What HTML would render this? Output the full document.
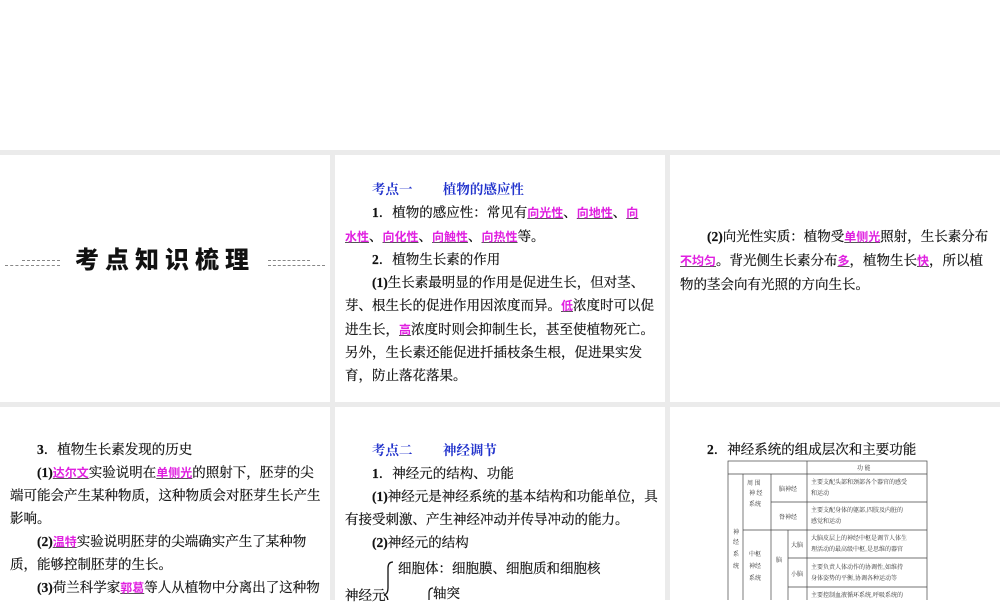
<!DOCTYPE html>
<html><head><meta charset="utf-8"><style>
*{margin:0;padding:0}
body{width:1000px;height:600px;background:#fff;position:relative;overflow:hidden;font-family:"Liberation Serif","Noto Serif CJK SC",serif;}
.bg{position:absolute;left:0;top:150px;width:1000px;height:450px;background:#ebebeb}
.p{position:absolute;background:#fff;overflow:hidden}
.l{position:absolute;white-space:nowrap;font-size:13.5px;color:#111;line-height:16px;-webkit-text-stroke:0.2px #111}
.b{font-weight:bold}
.k{color:#e020e0;font-weight:bold;text-decoration:underline;text-decoration-color:#555;font-size:12px;-webkit-text-stroke:0;font-family:"Liberation Sans","Noto Sans CJK SC",sans-serif}
.h{color:#2233cc;font-weight:bold;-webkit-text-stroke:0}
.title{position:absolute;left:0;top:246px;width:330px;text-align:center;font-family:"Liberation Sans","Noto Sans CJK SC",sans-serif;font-weight:900;font-size:24px;letter-spacing:6px;color:#111;line-height:30px}
.dl{position:absolute;height:0;border-top:1px dashed #888}
</style></head><body>
<div class="bg"></div>
<div class="p" style="left:0;top:155px;width:330px;height:247px"></div>
<div class="p" style="left:335px;top:155px;width:330px;height:247px"></div>
<div class="p" style="left:670px;top:155px;width:330px;height:247px"></div>
<div class="p" style="left:0;top:407px;width:330px;height:193px"></div>
<div class="p" style="left:335px;top:407px;width:330px;height:193px"></div>
<div class="p" style="left:670px;top:407px;width:330px;height:193px"></div>

<div class="title">考点知识梳理</div>
<div class="dl" style="left:5px;top:265px;width:55px"></div>
<div class="dl" style="left:22px;top:260px;width:38px"></div>
<div class="dl" style="left:268px;top:265px;width:57px"></div>
<div class="dl" style="left:268px;top:260px;width:42px"></div>

<div class="l h" style="left:372px;top:182px">考点一&nbsp;&nbsp;&nbsp;&nbsp;&nbsp;&nbsp;&nbsp;&nbsp;&nbsp;植物的感应性</div>
<div class="l" style="left:372px;top:205px"><span class="b">1</span>．植物的感应性：常见有<span class="k">向光性</span>、<span class="k">向地性</span>、<span class="k">向</span></div>
<div class="l" style="left:345px;top:229px"><span class="k">水性</span>、<span class="k">向化性</span>、<span class="k">向触性</span>、<span class="k">向热性</span>等。</div>
<div class="l" style="left:372px;top:252px"><span class="b">2</span>．植物生长素的作用</div>
<div class="l" style="left:372px;top:275px"><span class="b">(1)</span>生长素最明显的作用是促进生长，但对茎、</div>
<div class="l" style="left:345px;top:298px">芽、根生长的促进作用因浓度而异。<span class="k">低</span>浓度时可以促</div>
<div class="l" style="left:345px;top:322px">进生长，<span class="k">高</span>浓度时则会抑制生长，甚至使植物死亡。</div>
<div class="l" style="left:345px;top:345px">另外，生长素还能促进扦插枝条生根，促进果实发</div>
<div class="l" style="left:345px;top:368px">育，防止落花落果。</div>

<div class="l" style="left:707px;top:229px"><span class="b">(2)</span>向光性实质：植物受<span class="k">单侧光</span>照射，生长素分布</div>
<div class="l" style="left:680px;top:253px"><span class="k">不均匀</span>。背光侧生长素分布<span class="k">多</span>，植物生长<span class="k">快</span>，所以植</div>
<div class="l" style="left:680px;top:277px">物的茎会向有光照的方向生长。</div>

<div class="l" style="left:37px;top:442px"><span class="b">3</span>．植物生长素发现的历史</div>
<div class="l" style="left:37px;top:465px"><span class="b">(1)</span><span class="k">达尔文</span>实验说明在<span class="k">单侧光</span>的照射下，胚芽的尖</div>
<div class="l" style="left:10px;top:488px">端可能会产生某种物质，这种物质会对胚芽生长产生</div>
<div class="l" style="left:10px;top:511px">影响。</div>
<div class="l" style="left:37px;top:534px"><span class="b">(2)</span><span class="k">温特</span>实验说明胚芽的尖端确实产生了某种物</div>
<div class="l" style="left:10px;top:557px">质，能够控制胚芽的生长。</div>
<div class="l" style="left:37px;top:580px"><span class="b">(3)</span>荷兰科学家<span class="k">郭葛</span>等人从植物中分离出了这种物</div>

<div class="l h" style="left:372px;top:443px">考点二&nbsp;&nbsp;&nbsp;&nbsp;&nbsp;&nbsp;&nbsp;&nbsp;&nbsp;神经调节</div>
<div class="l" style="left:372px;top:466px"><span class="b">1</span>．神经元的结构、功能</div>
<div class="l" style="left:372px;top:489px"><span class="b">(1)</span>神经元是神经系统的基本结构和功能单位，具</div>
<div class="l" style="left:345px;top:512px">有接受刺激、产生神经冲动并传导冲动的能力。</div>
<div class="l" style="left:372px;top:535px"><span class="b">(2)</span>神经元的结构</div>
<div class="l" style="left:398px;top:561px">细胞体：细胞膜、细胞质和细胞核</div>
<div class="l" style="left:345px;top:588px">神经元</div>
<div class="l" style="left:433px;top:586px">轴突</div>
<svg style="position:absolute;left:380px;top:560px" width="60" height="40"><path d="M13 2 Q8 2 8 8 L8 28 Q8 34 4 35 Q8 36 8 42" fill="none" stroke="#111" stroke-width="1.3"/><path d="M53 28 Q49 28 49 33 L49 40" fill="none" stroke="#111" stroke-width="1.2"/></svg>

<div class="l" style="left:707px;top:442px"><span class="b">2</span>．神经系统的组成层次和主要功能</div>
<svg style="position:absolute;left:727px;top:460px" width="202" height="140" font-family="Noto Serif CJK SC,serif" font-size="6" fill="#333">
<g stroke="#444" stroke-width="0.7" fill="none">
<rect x="1" y="1" width="199" height="150"/>
<line x1="1" y1="14" x2="200" y2="14"/>
<line x1="16" y1="14" x2="16" y2="150"/>
<line x1="80" y1="1" x2="80" y2="150"/>
<line x1="44" y1="14" x2="44" y2="70"/>
<line x1="44" y1="42" x2="200" y2="42"/>
<line x1="16" y1="70" x2="200" y2="70"/>
<line x1="44" y1="70" x2="44" y2="150"/>
<line x1="61" y1="70" x2="61" y2="150"/>
<line x1="61" y1="98" x2="200" y2="98"/>
<line x1="61" y1="127" x2="200" y2="127"/>
</g>
<text x="130" y="10">功 能</text>
<text x="20" y="25">周 围</text><text x="22" y="35">神 经</text><text x="22" y="46">系统</text>
<text x="52" y="31">脑神经</text><text x="52" y="59">脊神经</text>
<text x="84" y="24">主要支配头部和颈部各个器官的感受</text><text x="84" y="35">和运动</text>
<text x="84" y="52">主要支配身体的躯部,四肢及内脏的</text><text x="84" y="63">感觉和运动</text>
<text x="6" y="74">神</text><text x="6" y="84">经</text><text x="6" y="96">系</text><text x="6" y="108">统</text>
<text x="22" y="96">中枢</text><text x="22" y="108">神经</text><text x="22" y="120">系统</text>
<text x="49" y="102">脑</text>
<text x="64" y="87">大脑</text><text x="64" y="116">小脑</text>
<text x="84" y="80">大脑皮层上的神经中枢是调节人体生</text><text x="84" y="91">理活动的最高级中枢,是思维的器官</text>
<text x="84" y="109">主要负责人体动作的协调性,如维持</text><text x="84" y="120">身体姿势的平衡,协调各种运动等</text>
<text x="84" y="137">主要控制血液循环系统,呼吸系统的</text>
</svg>
</body></html>
